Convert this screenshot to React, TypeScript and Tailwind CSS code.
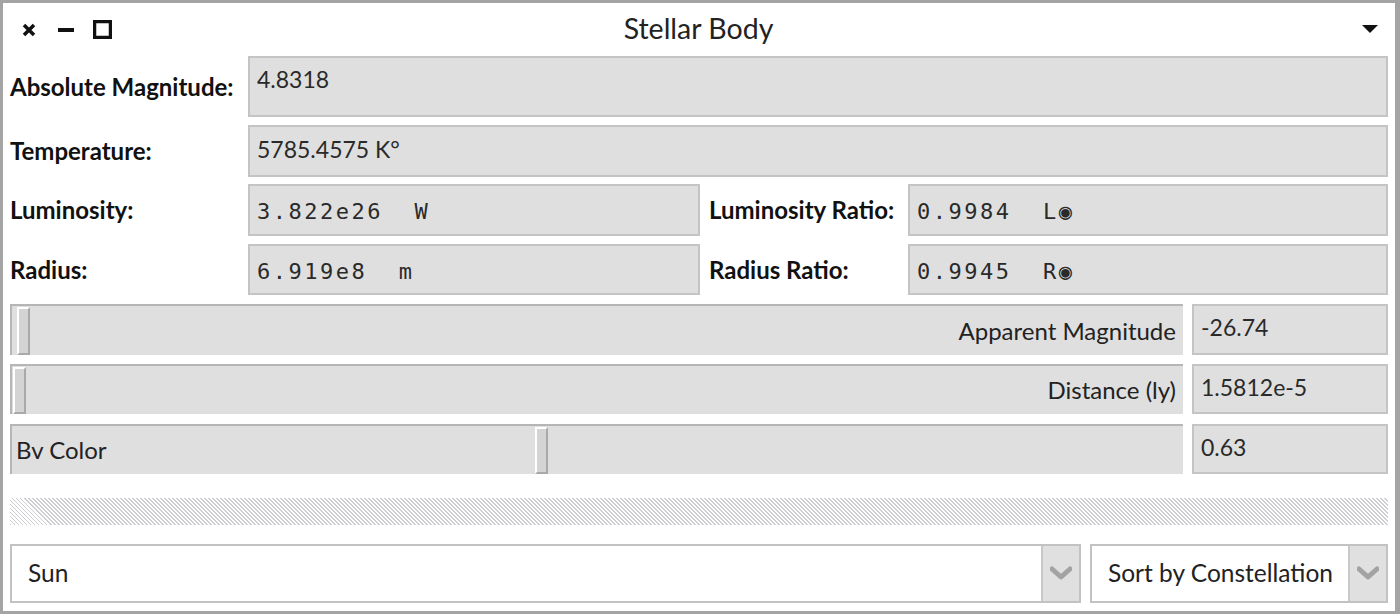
import React from "react";

const SANS = "font-['Lato','Noto_Sans',sans-serif]";
const MONO = "font-['DejaVu_Sans_Mono',monospace]";

// text field look (grey fill, light grey frame)
const FIELD = "bg-[#dfdfdf] border-2 border-[#c4c4c4] text-[#2a2a2a]";

function Label({ text, w }: { text: string; w: string }) {
  return (
    <div className={`${w} shrink-0 flex items-center text-[24px] font-bold text-[#111]`}>{text}</div>
  );
}

function Slider({ label, thumb, left }: { label: string; thumb: string; left?: boolean }) {
  return (
    <div className="relative flex-1 h-full bg-[#dfdfdf] border-t-2 border-l-2 border-[#b6b6b6] flex items-center">
      <span
        className={`absolute top-[1px] bottom-[0px] w-[13px] bg-[#d4d4d4] border-l-2 border-t-2 border-white border-r-2 border-b-2 border-r-[#a9a9a9] border-b-[#a9a9a9] ${thumb}`}
      />
      <span className={`text-[24px] text-[#222] w-full ${left ? "pl-[4px]" : "text-right pr-[7px]"}`}>{label}</span>
    </div>
  );
}

function Chevron() {
  return (
    <svg width="22" height="16" viewBox="0 0 22 16">
      <path d="M2 3 L11 11 L20 3" fill="none" stroke="#a3a3a3" strokeWidth="5" strokeLinejoin="round" strokeLinecap="round" />
    </svg>
  );
}

function Dropdown({ text, w }: { text: string; w: string }) {
  return (
    <div className={`${w} h-full bg-white border-2 border-[#c2c2c2] flex items-stretch`}>
      <div className="flex-1 flex items-center pl-[16px] text-[24.5px] text-[#222]">{text}</div>
      <div className="w-[38px] bg-[#e0e0e0] border-l-2 border-[#c8c8c8] flex items-center justify-center">
        <Chevron />
      </div>
    </div>
  );
}

export default function App() {
  return (
    <div className={`${SANS} w-[1400px] h-[614px] bg-white border-[3px] border-[#a4a4a4] border-r-[5px] flex flex-col overflow-hidden`}>
      {/* title bar */}
      <div className="h-[53px] shrink-0 flex items-center relative">
        <div className="flex items-center pl-[18px]">
          <svg width="16" height="16" viewBox="0 0 16 16">
            <path d="M3 3 L13 13 M13 3 L3 13" stroke="#111" strokeWidth="3.5" />
          </svg>
          <svg width="16" height="16" viewBox="0 0 16 16" className="ml-[21px]">
            <rect x="0" y="6" width="16" height="4" fill="#111" />
          </svg>
          <svg width="19" height="19" viewBox="0 0 19 19" className="ml-[19px]">
            <rect x="1.5" y="1.5" width="16" height="16" fill="none" stroke="#111" strokeWidth="3.5" />
          </svg>
        </div>
        <div className="flex-1 text-center text-[28.5px] text-[#222] pr-[76px] -mt-[2px]">Stellar Body</div>
        <svg width="18" height="10" viewBox="0 0 18 10" className="mr-[16px] -mt-[2px]">
          <path d="M1 1 L17 1 L9 9 Z" fill="#111" />
        </svg>
      </div>

      <div className="flex-1 flex flex-col pl-[7px] pr-[7px]">
        {/* Absolute magnitude */}
        <div className="h-[61px] flex">
          <Label text="Absolute Magnitude:" w="w-[238px]" />
          <div className={`${FIELD} flex-1 pl-[7px] pt-[4px] text-[23px]`}>4.8318</div>
        </div>

        {/* Temperature */}
        <div className="h-[52px] mt-[8px] flex">
          <Label text="Temperature:" w="w-[238px]" />
          <div className={`${FIELD} flex-1 pl-[7px] pt-[5px] text-[23px]`}>5785.4575 K°</div>
        </div>

        {/* Luminosity */}
        <div className="h-[52px] mt-[7px] flex">
          <Label text="Luminosity:" w="w-[238px]" />
          <div className={`${FIELD} w-[452px] pl-[7px] pt-[9px] text-[22px] ${MONO} tracking-[2.5px] whitespace-pre`}>3.822e26  W</div>
          <div className="w-[9px]" />
          <Label text="Luminosity Ratio:" w="w-[199px]" />
          <div className={`${FIELD} flex-1 pl-[7px] pt-[9px] text-[22px] ${MONO} tracking-[2.5px] whitespace-pre`}>0.9984  L◉</div>
        </div>

        {/* Radius */}
        <div className="h-[51px] mt-[8px] flex">
          <Label text="Radius:" w="w-[238px]" />
          <div className={`${FIELD} w-[452px] pl-[7px] pt-[9px] text-[22px] ${MONO} tracking-[2.5px] whitespace-pre`}>6.919e8  m</div>
          <div className="w-[9px]" />
          <Label text="Radius Ratio:" w="w-[199px]" />
          <div className={`${FIELD} flex-1 pl-[7px] pt-[9px] text-[22px] ${MONO} tracking-[2.5px] whitespace-pre`}>0.9945  R◉</div>
        </div>

        {/* sliders */}
        <div className="h-[51px] mt-[9px] flex gap-[9px]">
          <Slider label="Apparent Magnitude" thumb="left-[5px]" />
          <div className={`${FIELD} w-[196px] pl-[7px] pt-[4px] text-[23px]`}>-26.74</div>
        </div>
        <div className="h-[50px] mt-[9px] flex gap-[9px]">
          <Slider label="Distance (ly)" thumb="left-[1px]" />
          <div className={`${FIELD} w-[196px] pl-[7px] pt-[4px] text-[23px]`}>1.5812e-5</div>
        </div>
        <div className="h-[50px] mt-[10px] flex gap-[9px]">
          <Slider label="Bv Color" thumb="left-[523px]" left />
          <div className={`${FIELD} w-[196px] pl-[7px] pt-[4px] text-[23px]`}>0.63</div>
        </div>

        {/* splitter */}
        <div className="h-[27px] mt-[24px] bg-[image:repeating-linear-gradient(45deg,#cdcdd2_0px,#cdcdd2_1.4px,#ffffff_1.4px,#ffffff_2.83px)]" />

        {/* dropdowns */}
        <div className="h-[59px] mt-[19px] flex gap-[9px]">
          <Dropdown text="Sun" w="w-[1071px]" />
          <Dropdown text="Sort by Constellation" w="flex-1" />
        </div>
      </div>
    </div>
  );
}
